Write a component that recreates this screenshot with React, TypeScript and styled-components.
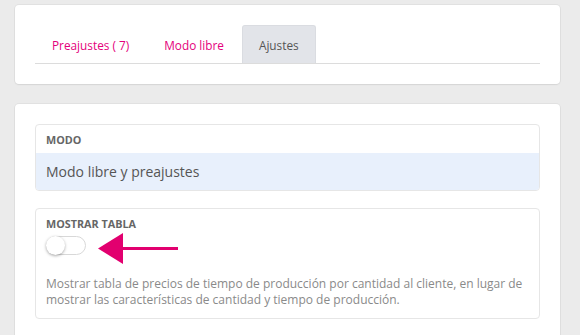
import React from "react";
import styled, { createGlobalStyle } from "styled-components";

const Global = createGlobalStyle`
  html, body { margin: 0; padding: 0; background: #ebebeb; }
  body { font-family: "Open Sans", "Liberation Sans", sans-serif; }
  * { box-sizing: border-box; }
`;

const Page = styled.div`
  padding: 5px 20px 0 15px;
  display: flex;
  flex-direction: column;
  gap: 20px;
  width: 580px;
  height: 335px;
  overflow: hidden;
`;

const Card = styled.div`
  background: #fff;
  border-radius: 4px;
  box-shadow: 0 0 0 1px rgba(0, 0, 0, 0.04), 0 1px 2px rgba(0, 0, 0, 0.06);
  padding: 20px;
  display: flex;
  flex-direction: column;
  gap: 17px;
`;

const Tabs = styled.div`
  display: flex;
  gap: 1px;
  border-bottom: 1px solid #dcdcdc;
  height: 39px;
`;

const Tab = styled.div<{ $active?: boolean }>`
  padding: 0 16px;
  height: 38px;
  display: flex;
  align-items: center;
  font-size: 11.8px;
  color: ${(p) => (p.$active ? "#555" : "#e4007c")};
  background: ${(p) => (p.$active ? "#e2e4e9" : "transparent")};
  border-radius: 3px 3px 0 0;
  border: 1px solid ${(p) => (p.$active ? "#dadce1" : "transparent")};
  border-bottom: none;
`;

const Box = styled.div`
  border: 1px solid #e6e6e6;
  border-radius: 4px;
  overflow: hidden;
  position: relative;
`;

const BoxHeader = styled.div`
  height: 28px;
  padding: 0 10px;
  display: flex;
  align-items: center;
  font-size: 10.8px;
  font-weight: 700;
  color: #666;
`;

const SelectedRow = styled.div`
  height: 37px;
  padding: 0 10px;
  display: flex;
  align-items: center;
  background: #e8f0fc;
  font-size: 14px;
  color: #555;
`;

const BoxBody = styled.div`
  padding: 8px 10px 10px;
  display: flex;
  flex-direction: column;
`;

const Label = styled.div`
  font-size: 10.8px;
  font-weight: 700;
  color: #666;
  line-height: 14px;
`;

const Toggle = styled.div`
  margin-top: 5px;
  width: 40px;
  height: 19px;
  border-radius: 10px;
  border: 1px solid #d8d8d8;
  background: #fff;
  position: relative;
`;

const Knob = styled.div`
  position: absolute;
  left: -1px;
  top: -1px;
  width: 19px;
  height: 19px;
  border-radius: 50%;
  background: #fff;
  box-shadow: 0 1px 3px rgba(0, 0, 0, 0.35);
`;

const Description = styled.p`
  margin: 21px 0 0;
  font-size: 12px;
  line-height: 16px;
  color: #8a8a8a;
`;

const Arrow = styled.svg`
  position: absolute;
  left: 62px;
  top: 23px;
`;

export default function App() {
  return (
    <>
      <Global />
      <Page>
        <Card>
          <Tabs>
            <Tab>Preajustes ( 7)</Tab>
            <Tab>Modo libre</Tab>
            <Tab $active>Ajustes</Tab>
          </Tabs>
        </Card>
        <Card>
          <Box>
            <BoxHeader>MODO</BoxHeader>
            <SelectedRow>Modo libre y preajustes</SelectedRow>
          </Box>
          <Box>
            <BoxBody>
              <Label>MOSTRAR TABLA</Label>
              <Toggle>
                <Knob />
              </Toggle>
              <Description>
                Mostrar tabla de precios de tiempo de producción por cantidad al cliente, en lugar de
                mostrar las características de cantidad y tiempo de producción.
              </Description>
            </BoxBody>
            <Arrow width="84" height="34" viewBox="0 0 84 34">
              <polygon points="0,16.5 25,1 25,32" fill="#e2006f" />
              <rect x="24" y="15" width="56" height="3" fill="#e2006f" />
            </Arrow>
          </Box>
        </Card>
      </Page>
    </>
  );
}
